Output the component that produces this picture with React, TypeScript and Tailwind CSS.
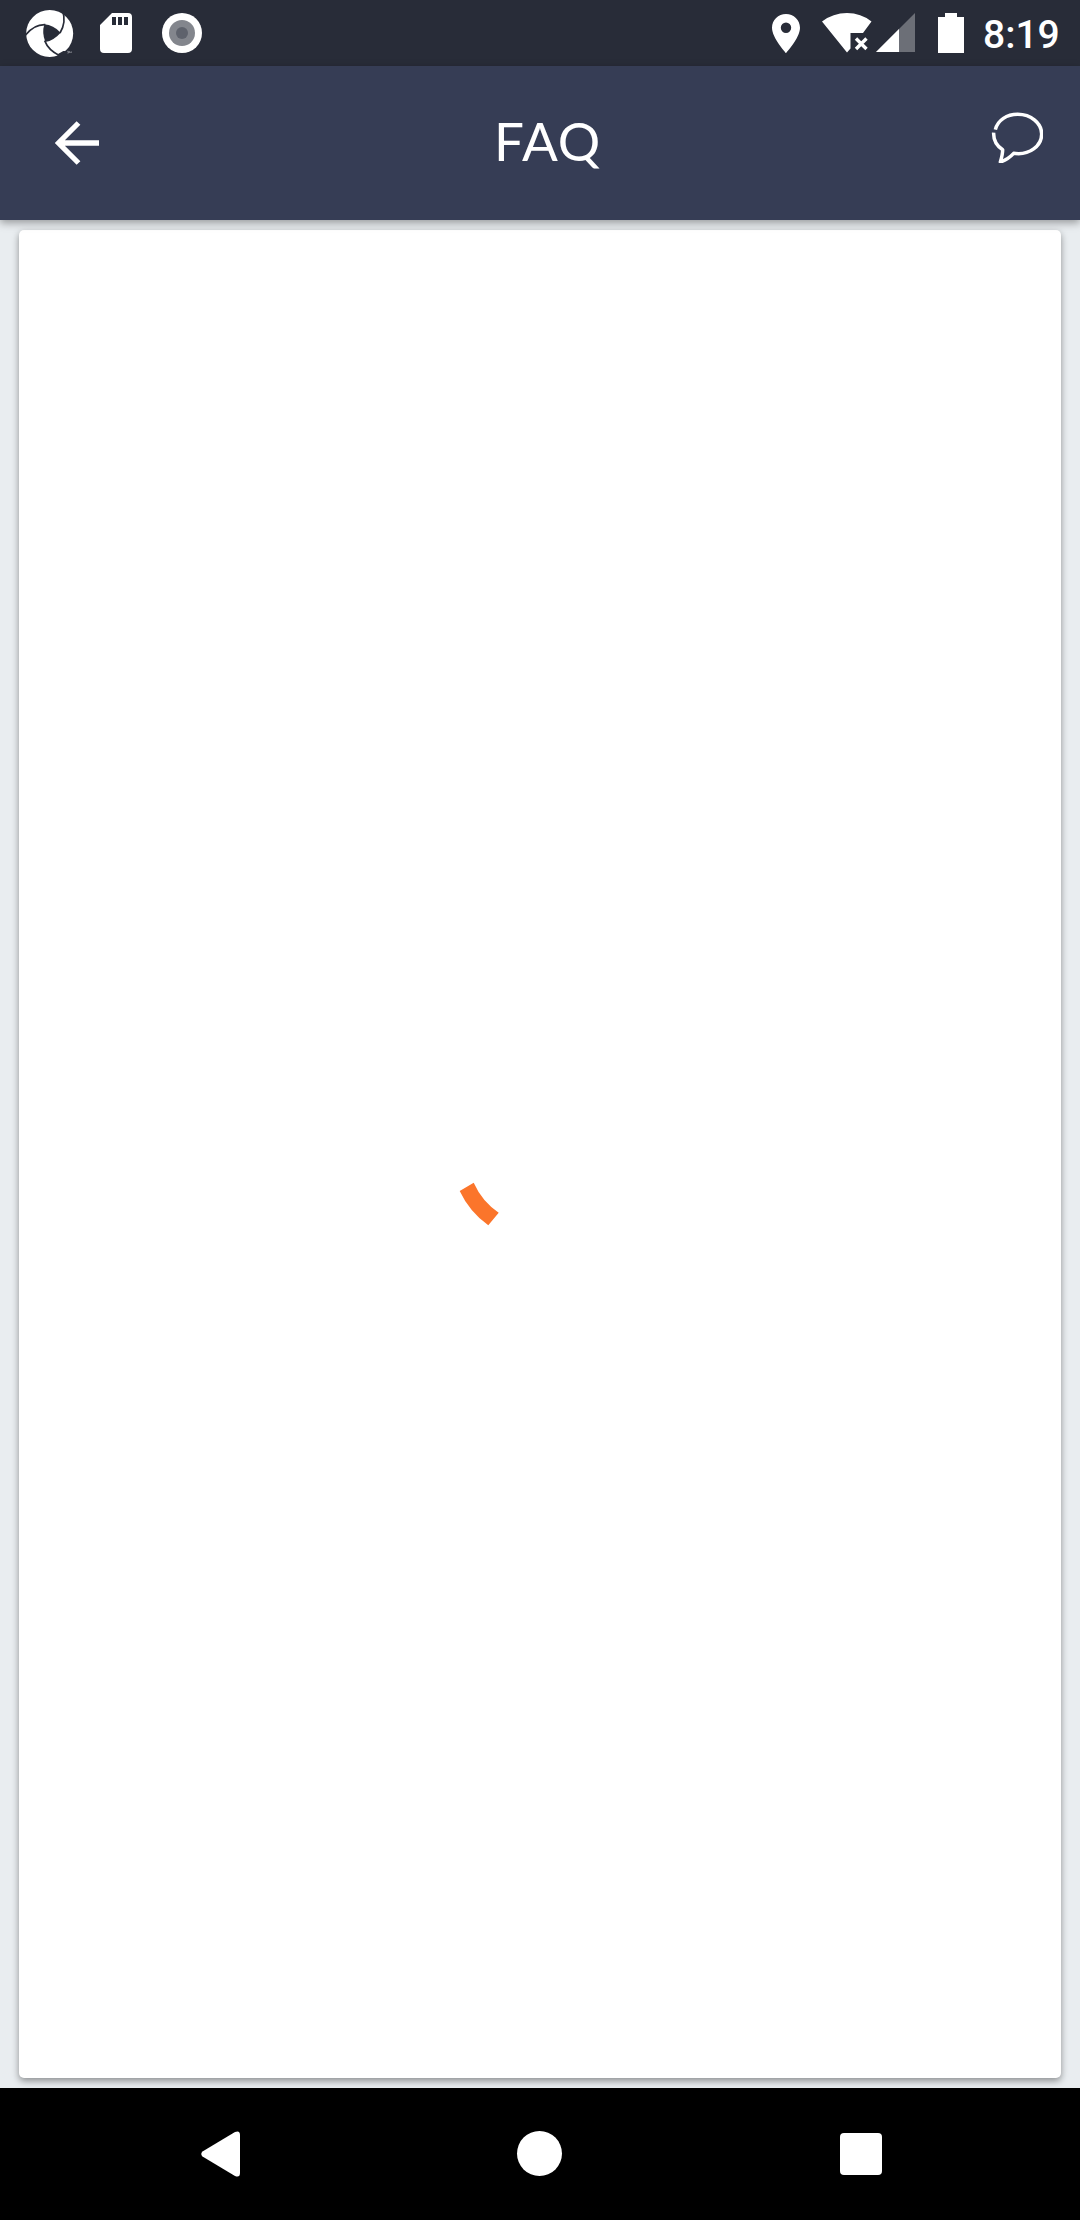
function StatusBar() {
  return (
    <header className="flex h-[66px] items-start justify-between bg-[#282c38] text-white">
      <div className="flex">
        <svg className="ml-6 h-[66px] w-[52px]" viewBox="72 0 156 198" fill="none">
          <circle cx="149" cy="100.500" r="70.500" fill="#fff" />
          <path d="M133 73Q160 75 182 98Q162 121 136 126Q125 99 133 73Z" fill="#282c38" />
          <path d="M76 106Q102 73 136 74M187 30Q200 66 180 99M134 122Q145 151 179 167" stroke="#282c38" strokeWidth="5" />
          <path d="M174 162L190 153L207 154V173H171Z" fill="#282c38" />
          <path d="M201 154h5v5h-4M208 154v5M208 155l3 2 3-2v4" stroke="#bfc1c7" strokeWidth="1.500" />
        </svg>
        <svg className="ml-6 h-[66px] w-8" viewBox="0 0 32 66">
          <path fill="#fff" fillRule="evenodd" d="M12 13H28Q32 13 32 17V49Q32 53 28 53H4Q0 53 0 49V25ZM12 17V25H16V17ZM18 17V25H22V17ZM24 17V25H28V17Z" />
        </svg>
        <svg className="ml-[30px] h-[66px] w-10" viewBox="0 0 40 66">
          <circle cx="20" cy="33" r="20" fill="#fff" />
          <circle cx="20" cy="33" r="13" fill="#83868d" />
          <circle cx="20" cy="33" r="6" fill="#5e626c" />
        </svg>
      </div>
      <div className="flex pr-[22px]">
        <svg className="mr-[22px] h-[66px] w-7" viewBox="0 0 28 66">
          <path fill="#fff" fillRule="evenodd" d="M14 14C6.300 14 0 20 0 27.700C0 38 14 53 14 53S28 38 28 27.700C28 20 21.700 14 14 14ZM14 22.500a5.200 5.200 0 1 0 0 10.400a5.200 5.200 0 0 0 0-10.400Z" />
        </svg>
        <svg className="mr-1 h-[66px] w-[50px]" viewBox="0 0 50 66">
          <path fill="#fff" d="M0 21.500Q11 13 25 13T49.500 21.500L41 33H28.500V48.500L25 52.500Z" />
          <path d="M34 38.500l10.500 10.500M44.500 38.500L34 49" stroke="#fff" strokeWidth="3.400" />
        </svg>
        <svg className="mr-[23px] h-[66px] w-[39px]" viewBox="0 0 39 66">
          <path d="M0 52L39 13V52Z" fill="#6c6f77" />
          <path d="M0 52L23 29V52Z" fill="#fff" />
        </svg>
        <svg className="mr-[19px] h-[66px] w-[26px]" viewBox="0 0 26 66">
          <path fill="#fff" d="M7 13H19V17H26V53H0V17H7Z" />
        </svg>
        <time className="w-[75px] whitespace-nowrap pt-3 font-['Roboto',sans-serif] text-[39px] font-medium leading-[46px]">8:19</time>
      </div>
    </header>
  );
}

function AppBar() {
  return (
    <div className="relative z-10 flex h-[154px] items-center justify-between bg-[#363d55] text-white shadow-[0_3px_8px_rgba(0,0,0,0.35)]">
      <button aria-label="Back" className="ml-[55px] h-11 w-11">
        <svg className="h-11 w-11" viewBox="0 0 44 44" fill="none" stroke="#fff" strokeWidth="5.300">
          <path d="M23.500 2L3.500 22L23.500 42M4 22H44" />
        </svg>
      </button>
      <h1 className="ml-2 w-[110px] whitespace-nowrap pb-[5px] font-['Lato',sans-serif] text-[53px] font-normal leading-[64px] tracking-[1px]">FAQ</h1>
      <button aria-label="Chat" className="mb-[12px] mr-[37px] h-[52px] w-[52px]">
        <svg className="h-[52px] w-[52px]" viewBox="0 0 156 156" fill="none" stroke="#fff" strokeWidth="10.500" strokeLinejoin="round">
          <path d="M13 56C20 27 48 10 80 10C120 10 152 37 152 69C152 104 116 134 68 127Q50 146 28 153Q35 130 35 116C18 105 7 88 8 65" />
        </svg>
      </button>
    </div>
  );
}

function Spinner() {
  return (
    <svg className="h-44 w-44" viewBox="-88 -88 176 176" role="progressbar">
      <path fill="#fb752b" d="M-80.300 37A88 88 0 0 0 -51.700 71.300L-41.300 58.700A72 72 0 0 1 -66.300 28.700Z" />
    </svg>
  );
}

function NavigationBar() {
  return (
    <nav className="flex h-[132px] items-center justify-between bg-black pl-[201px] pr-[198px]">
      <svg className="h-[46px] w-[39px]" viewBox="0 0 39 46">
        <path fill="#fff" d="M1.500 20.500L34 1Q39-1 39 4V42Q39 47 34 45L1.500 25.500Q-1 23 1.500 20.500Z" />
      </svg>
      <div className="mb-px mr-px h-[45px] w-[45px] rounded-full bg-white" />
      <div className="h-[42px] w-[42px] rounded-[4px] bg-white" />
    </nav>
  );
}

export default function App() {
  return (
    <div className="flex h-[2220px] w-[1080px] flex-col overflow-hidden bg-[#e9edf0]">
      <StatusBar />
      <AppBar />
      <main className="flex flex-1 px-[19px] py-[10px]">
        <section className="flex flex-1 items-center justify-center rounded-[5px] bg-white shadow-[0_3px_7px_rgba(0,0,0,0.4)]">
          <Spinner />
        </section>
      </main>
      <NavigationBar />
    </div>
  );
}
